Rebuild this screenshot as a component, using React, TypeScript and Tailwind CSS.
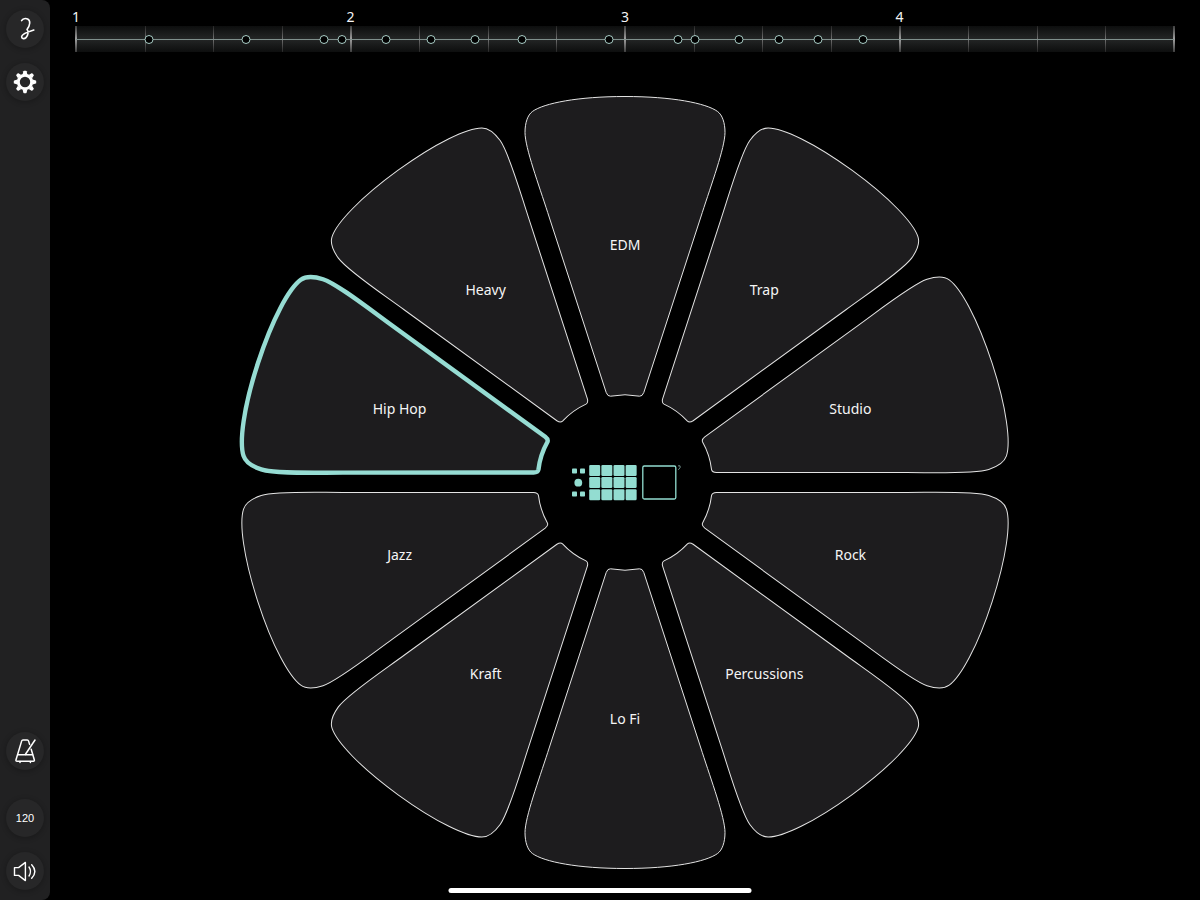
import React, { useState } from 'react';

const KITS = ['EDM', 'Trap', 'Studio', 'Rock', 'Percussions', 'Lo Fi', 'Kraft', 'Jazz', 'Hip Hop', 'Heavy'];

const BEATS = [1, 2, 3, 4];
const STEPS = Array.from({ length: 17 }, (_, i) => i);

// hit positions, in percent of the bar
const HITS = [6.65, 15.45, 22.6, 24.2, 28.25, 32.3, 36.3, 40.6, 48.5, 54.85, 56.4, 60.4, 64.05, 67.6, 71.65];

const PETAL =
  'M-18.8 -90 L-77.3 -270 C-86 -297 -100 -335 -100 -350 C-100 -359.5 -97.4 -367.5 -92.6 -371 C-81 -379.4 -47 -386 0 -386 C47 -386 81 -379.4 92.6 -371 C97.4 -367.5 100 -359.5 100 -350 C100 -335 86 -297 77.3 -270 L18.8 -90 Q17.4 -86 14.5 -86.3 Q0 -89.2 -14.5 -86.3 Q-17.4 -86 -18.8 -90 Z';

const WHEEL_SIZE = 774;
const LABEL_RADIUS = 237;

const labelPosition = (index: number) => {
  const angle = (index * 36 * Math.PI) / 180;
  return {
    left: `${50 + (Math.sin(angle) * LABEL_RADIUS * 100) / WHEEL_SIZE}%`,
    top: `${50 - (Math.cos(angle) * LABEL_RADIUS * 100) / WHEEL_SIZE}%`,
  };
};

const SideButton: React.FC<{ label: string; children: React.ReactNode }> = ({ label, children }) => (
  <button
    type="button"
    aria-label={label}
    className="flex size-[38px] items-center justify-center rounded-full bg-[#272728] text-white shadow-[0_1px_5px_1px_rgba(0,0,0,0.2)]"
  >
    {children}
  </button>
);

const LogoIcon = () => (
  <svg viewBox="0 0 24 24" className="size-6" fill="none" stroke="currentColor" strokeWidth="1.6" strokeLinecap="round" strokeLinejoin="round">
    <path d="M8.6 3.6 C9.8 1.8 12.6 1.2 14.6 2 C17.8 3.4 17.2 8.4 14 12.4 C15.8 14.2 15.2 18.4 13 20.6 C11.4 22.2 8.6 22 8.6 19.8 C8.6 17 13.4 15.2 20.8 13" />
  </svg>
);

const GearIcon = () => (
  <svg viewBox="-12 -12 24 24" className="size-6" fill="currentColor">
    <circle r="6.7" fill="none" stroke="currentColor" strokeWidth="3" />
    {[0, 45, 90, 135, 180, 225, 270, 315].map((angle) => (
      <path key={angle} d="M-2.4 -7.6 L-1.6 -10.8 Q-1.5 -11.2 -1 -11.2 H1 Q1.5 -11.2 1.6 -10.8 L2.4 -7.6 Z" transform={`rotate(${angle})`} />
    ))}
  </svg>
);

const MetronomeIcon = () => (
  <svg viewBox="0 0 24 24" className="size-6 overflow-visible" fill="none" stroke="currentColor" strokeWidth="1.5" strokeLinecap="round" strokeLinejoin="round">
    <path d="M16.6 5.4 L15.5 1.9 Q15.2 0.9 14.2 0.9 H10 Q9 0.9 8.7 1.9 L3 20.8 Q2.6 22.2 4 22.2 H20.3 Q21.7 22.2 21.3 20.8 L18.2 10.3" />
    <path d="M4.7 15.7 H19.5" />
    <path d="M12.3 15.5 L22 1" />
    <path d="M7 22.6 V23.4 M17.4 22.6 V23.4" />
  </svg>
);

const SpeakerIcon = () => (
  <svg viewBox="0 0 24 24" className="size-6" fill="none" stroke="currentColor" strokeWidth="1.4" strokeLinecap="round" strokeLinejoin="round">
    <path d="M1.5 8.6 H5.6 L12.4 3.4 V21.6 L5.6 16.4 H1.5 Z" />
    <path d="M16 8 Q19 12.5 16 17" />
    <path d="M18.7 5.8 Q25 12.5 18.7 19.2" />
  </svg>
);

const Sidebar = () => (
  <aside className="flex w-[50px] shrink-0 flex-col items-center rounded-r-lg bg-[#212122] py-[10px]">
    <div className="flex flex-col gap-[15px]">
      <SideButton label="Home"><LogoIcon /></SideButton>
      <SideButton label="Settings"><GearIcon /></SideButton>
    </div>
    <div className="mt-auto flex flex-col">
      <SideButton label="Metronome"><MetronomeIcon /></SideButton>
      <div className="mt-[29px] flex flex-col gap-[15px]">
        <SideButton label="Tempo">
          <span className="font-['Liberation_Sans',sans-serif] text-[11px]">120</span>
        </SideButton>
        <SideButton label="Volume"><SpeakerIcon /></SideButton>
      </div>
    </div>
  </aside>
);

const Timeline = () => (
  <header className="px-[26px] pt-2">
    <div className="grid grid-cols-4 text-sm leading-[18px] text-neutral-100">
      {BEATS.map((beat) => (
        <span key={beat} className="w-8 -translate-x-1/2 text-center">{beat}</span>
      ))}
    </div>
    <div className="relative h-[26px] bg-linear-to-b from-[#0d0e0e] via-[#242626] to-[#0d0e0e]">
      {STEPS.map((step) => (
        <span
          key={step}
          className={
            step % 4 === 0
              ? 'absolute inset-y-0 w-[2px] -translate-x-1/2 bg-linear-to-b from-neutral-700 via-neutral-400 to-neutral-700'
              : 'absolute inset-y-0 w-px bg-linear-to-b from-neutral-800 via-neutral-500 to-neutral-800'
          }
          style={{ left: `${(step * 100) / 16}%` }}
        />
      ))}
      <span className="absolute inset-x-0 top-[13px] h-px bg-[#7f8f8c]" />
      {HITS.map((hit) => (
        <span
          key={hit}
          className="absolute top-[9px] size-[9px] -translate-x-1/2 rounded-full border border-[#a9cdc6] bg-black"
          style={{ left: `${hit}%` }}
        />
      ))}
    </div>
  </header>
);

const CenterMark = () => (
  <g fill="#93ddd1">
    {[-53, -45].map((x) =>
      [-14, 9].map((y) => <rect key={`${x}${y}`} x={x} y={y} width="5" height="5" rx="0.8" />)
    )}
    <circle cx="-46.7" cy="0.2" r="3.9" />
    {[0, 1, 2, 3].map((col) =>
      [0, 1, 2].map((row) => (
        <rect key={`${col}-${row}`} x={-35.8 + col * 12.15} y={-17.6 + row * 12.15} width="11" height="11" rx="1.2" />
      ))
    )}
    <rect x="17.8" y="-16.5" width="33" height="33" rx="1.5" fill="none" stroke="#93ddd1" strokeWidth="1.3" />
    <path d="M53 -16.6 Q55.8 -17.6 55.2 -15.2 Q54.6 -13.6 53.2 -12.8" fill="none" stroke="#8fb5b0" strokeWidth="0.8" />
  </g>
);

export default function App() {
  const [selected, setSelected] = useState<string>('Hip Hop');

  return (
    <div className="flex min-h-screen bg-black font-['Noto_Sans',sans-serif] text-white">
      <Sidebar />

      <main className="flex min-w-0 grow flex-col pb-[31px]">
        <Timeline />

        <div className="flex grow items-center justify-center pt-[43px]">
          <div className="relative aspect-square w-full max-w-[774px]">
            <svg viewBox="-387 -387.5 774 774" className="size-full" aria-hidden="true">
              {KITS.map((kit, i) => (
                <path
                  key={kit}
                  d={PETAL}
                  transform={`rotate(${i * 36})`}
                  fill="#1d1c1e"
                  stroke={kit === selected ? '#96dcd3' : '#e4e4e4'}
                  strokeWidth={kit === selected ? 4.4 : 1}
                  className="cursor-pointer"
                  onClick={() => setSelected(kit)}
                />
              ))}
              <CenterMark />
            </svg>
            {KITS.map((kit, i) => (
              <button
                key={kit}
                type="button"
                aria-pressed={kit === selected}
                onClick={() => setSelected(kit)}
                className="absolute -translate-x-1/2 -translate-y-1/2 cursor-pointer text-sm whitespace-nowrap text-neutral-100"
                style={labelPosition(i)}
              >
                {kit}
              </button>
            ))}
          </div>
        </div>
      </main>

      <div className="fixed bottom-[7px] left-1/2 h-[5px] w-[303px] -translate-x-1/2 rounded-full bg-white" />
    </div>
  );
}
